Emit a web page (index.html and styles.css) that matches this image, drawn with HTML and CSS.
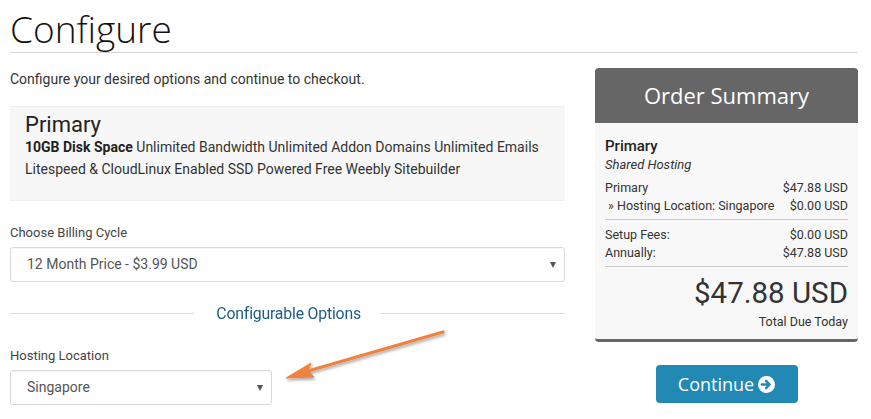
FILE: index.html
```html
<!DOCTYPE html>
<html>
<head>
<meta charset="utf-8">
<link rel="stylesheet" href="styles.css">
</head>
<body>
<div class="page">
  <h1 class="title">Configure</h1>
  <div class="cols">
    <div class="main">
      <p class="intro">Configure your desired options and continue to checkout.</p>
      <div class="product">
        <div class="product-name">Primary</div>
        <div class="product-desc"><strong>10GB Disk Space</strong> Unlimited Bandwidth Unlimited Addon Domains Unlimited Emails<br>Litespeed &amp; CloudLinux Enabled SSD Powered Free Weebly Sitebuilder</div>
      </div>
      <div class="field">
        <div class="label">Choose Billing Cycle</div>
        <div class="select">12 Month Price - $3.99 USD<span class="caret"></span></div>
      </div>
      <div class="divider"><span class="divider-line"></span><span class="divider-text">Configurable Options</span><span class="divider-line"></span></div>
      <div class="field field-short">
        <div class="label">Hosting Location</div>
        <div class="select select-short">Singapore<span class="caret"></span></div>
      </div>
    </div>
    <aside class="side">
      <div class="summary">
        <div class="summary-head">Order Summary</div>
        <div class="summary-body">
          <div class="sum-product">Primary</div>
          <div class="sum-group">Shared Hosting</div>
          <div class="sum-row"><span>Primary</span><span>$47.88 USD</span></div>
          <div class="sum-row"><span>&nbsp;» Hosting Location: Singapore</span><span>$0.00 USD</span></div>
          <div class="sum-sep"></div>
          <div class="sum-row"><span>Setup Fees:</span><span>$0.00 USD</span></div>
          <div class="sum-row"><span>Annually:</span><span>$47.88 USD</span></div>
          <div class="sum-sep"></div>
          <div class="sum-total">$47.88 USD</div>
          <div class="sum-due">Total Due Today</div>
        </div>
      </div>
      <div class="btn-wrap">
        <button class="btn">Continue <svg class="btn-icon" width="17" height="17" viewBox="0 0 16 16"><circle cx="8" cy="8" r="8" fill="#fff"/><path d="M3.6 8h7.2M7.6 4.6 11 8l-3.4 3.4" fill="none" stroke="#2189b3" stroke-width="2.3" stroke-linecap="round" stroke-linejoin="round"/></svg></button>
      </div>
    </aside>
  </div>
  <svg class="arrow" width="180" height="70" viewBox="0 0 180 70">
    <defs>
      <filter id="sh" x="-20%" y="-50%" width="140%" height="200%">
        <feDropShadow dx="1" dy="2" stdDeviation="1.5" flood-color="#000" flood-opacity="0.35"/>
      </filter>
    </defs>
    <g filter="url(#sh)">
      <path d="M167 12 L32 51" stroke="#f0823e" stroke-width="3.2" stroke-linecap="round"/>
      <path d="M10 58 L35 43 L32 51 L38 57 Z" fill="#f0823e" stroke="#f0823e" stroke-width="1" stroke-linejoin="round"/>
    </g>
  </svg>
</div>
</body>
</html>
```
FILE: styles.css
```css
* { box-sizing: border-box; }
html, body { margin: 0; padding: 0; background: #fff; }
body { font-family: Roboto, "Noto Sans", sans-serif; color: #333; font-size: 14px; }
.page { position: relative; width: 871px; padding: 0 13px 0 10px; }
.title {
  margin: 0;
  font-family: "Open Sans", sans-serif;
  font-weight: 300;
  font-size: 37px;
  line-height: 46px;
  padding-top: 6px;
  color: #111;
  border-bottom: 1px solid #d4d4d4;
}
.cols { display: flex; gap: 30px; }
.main { width: 555px; }
.side { width: 263px; padding-top: 15px; }
.intro { margin: 16px 0 0; line-height: 20px; color: #333; }
.product {
  margin-top: 17px;
  background: #f7f7f7;
  border-top: 1px solid #efefef;
  border-bottom: 1px solid #efefef;
  height: 95px;
  padding: 7px 15px 6px;
}
.product-name { font-size: 22px; line-height: 22px; color: #222; }
.product-desc { line-height: 22px; color: #333; }
.product-desc strong { font-weight: 700; color: #222; }
.field { margin-top: 24px; }
.label { font-size: 13px; line-height: 16px; color: #444; }
.select {
  position: relative;
  margin-top: 6px;
  height: 35px;
  border: 1px solid #d9d9d9;
  border-radius: 3px;
  padding-left: 16px;
  line-height: 33px;
  font-size: 14px;
  color: #555;
  background: #fff;
  box-shadow: inset 0 1px 1px rgba(0,0,0,0.04);
}
.select-short { width: 262px; }
.caret {
  position: absolute;
  right: 8px;
  top: 14px;
  width: 0; height: 0;
  border-left: 3.5px solid transparent;
  border-right: 3.5px solid transparent;
  border-top: 6px solid #555;
}
.divider { display: flex; align-items: center; margin-top: 21px; height: 20px; }
.divider-line { flex: 1; height: 1px; background: #ddd; }
.divider-text {
  padding: 0 14px 0 17px;
  font-size: 17px;
  color: #1d5b86;
  letter-spacing: -0.2px;
  transform: scaleX(0.93);
}
.field-short { margin-top: 25px; }
.summary {
  border-radius: 4px;
  background: #f8f8f8;
  border-bottom: 3px solid #666;
  overflow: hidden;
}
.summary-head {
  background: #666;
  color: #fff;
  height: 55px;
  line-height: 55px;
  text-align: center;
  font-family: "Open Sans", sans-serif;
  font-size: 22px;
  font-weight: 400;
}
.summary-body { padding: 13px 10px 7px; font-size: 12.5px; color: #333; }
.sum-product { font-size: 15px; font-weight: 500; color: #222; line-height: 20px; }
.sum-group { font-style: italic; font-size: 13px; line-height: 18px; margin-bottom: 5px; }
.sum-row { display: flex; justify-content: space-between; line-height: 18px; }
.sum-sep { height: 1px; background: #ccc; margin: 4px 0 6px; }
.sum-total { text-align: right; font-size: 29.5px; line-height: 40px; margin-top: 5px; color: #333; }
.sum-due { text-align: right; font-size: 12.5px; line-height: 20px; margin-top: -1px; }
.btn-wrap { display: flex; justify-content: center; margin-top: 23px; }
.btn {
  display: flex;
  align-items: center;
  gap: 4px;
  background: #2189b3;
  border: none;
  border-radius: 4px;
  color: #fff;
  font-family: "Open Sans", sans-serif;
  font-size: 18px;
  height: 38px;
  width: 142px;
  justify-content: center;
  padding: 0;
}
.btn-icon { display: block; margin-top: 1px; }
.arrow { position: absolute; left: 276px; top: 320px; }
```
